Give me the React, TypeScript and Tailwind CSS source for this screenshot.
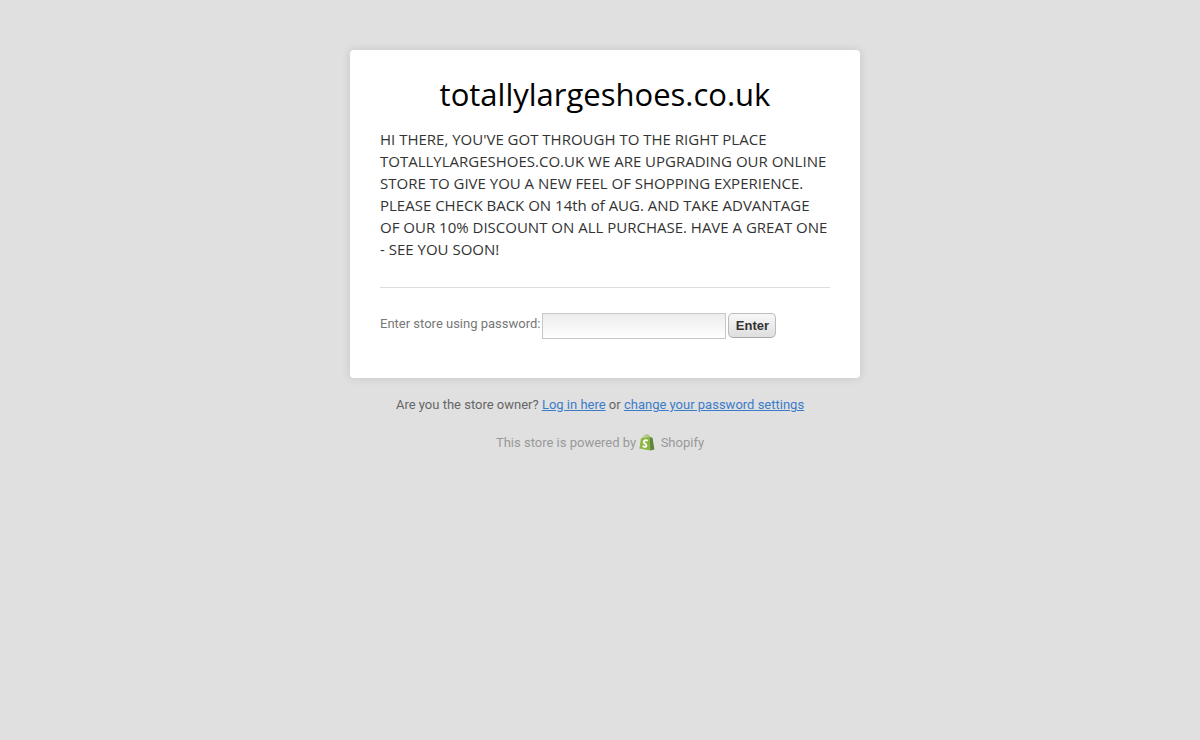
import { useState } from "react";

function ShopifyBag() {
    return (
        <svg
            viewBox="0 0 16 17"
            className="inline-block w-4 h-[17px] mr-0.5 align-[-4px]"
            aria-hidden="true"
        >
            <path d="M2 4.2 10.8 2.4l.4 14.1L.4 14.6z" fill="#8db543" />
            <path d="M10.8 2.4 12 3.5l1.5.2 1.9 11.7-4.2 1.1z" fill="#5a863e" />
            <path
                d="M4.1 4.4C4.5 2.4 5.8.9 7.1.9s1.8 1.2 1.8 2.6M6.5 3.9C6.8 2 7.9 1 8.8 1s1.5.8 1.7 2"
                fill="none"
                stroke="#8db543"
                strokeWidth="0.8"
            />
            <path
                d="M8.7 6.7C6.7 5.7 4.7 6.4 4.7 8c0 1.8 2.9 1.8 2.8 3.6-.1 1.6-2.2 1.7-3.9.5"
                fill="none"
                stroke="#fff"
                strokeWidth="1.8"
            />
        </svg>
    );
}

export default function App() {
    const [password, setPassword] = useState("");

    return (
        <div className="min-h-screen bg-[#e0e0e0] pt-[50px] font-['Roboto',sans-serif] text-[13px] leading-[18px]">
            <div className="max-w-[500px] mx-auto">
                {/* CARD */}
                <main className="w-full min-[520px]:w-[510px] bg-white rounded-sm px-[30px] pt-[23px] pb-[39px] shadow-[0_0_10px_rgba(0,0,0,0.12)]">
                    <h1 className="text-center font-['Open_Sans',sans-serif] text-[31px] leading-[42px] text-black">
                        totallylargeshoes.co.uk
                    </h1>

                    <p className="mt-[13px] font-['Open_Sans',sans-serif] text-[15px] leading-[22px] text-[#333]">
                        HI THERE, YOU'VE GOT THROUGH TO THE RIGHT PLACE
                        TOTALLYLARGESHOES.CO.UK WE ARE UPGRADING OUR ONLINE
                        STORE TO GIVE YOU A NEW FEEL OF SHOPPING EXPERIENCE.
                        PLEASE CHECK BACK ON 14th of AUG. AND TAKE ADVANTAGE
                        OF OUR 10% DISCOUNT ON ALL PURCHASE. HAVE A GREAT ONE
                        - SEE YOU SOON!
                    </p>

                    <form
                        className="mt-[27px] pt-[25px] border-t border-[#ddd] flex flex-wrap items-start gap-0.5"
                        onSubmit={(e) => e.preventDefault()}
                    >
                        <label htmlFor="password" className="pt-0.5 text-[#777] whitespace-nowrap">
                            Enter store using password:
                        </label>
                        <input
                            id="password"
                            type="password"
                            value={password}
                            onChange={(e) => setPassword(e.target.value)}
                            className="w-[184px] h-[26px] px-1 border border-[#c4c8c8] bg-linear-to-b from-[#ececec] to-white outline-none"
                        />
                        <button
                            type="submit"
                            className="w-12 h-[25px] rounded-[5px] border border-[#bbb] border-b-[#aaa] bg-linear-to-b from-[#f8f8f8] to-[#dedede] font-['Liberation_Sans',sans-serif] font-bold text-[#333] cursor-pointer"
                        >
                            Enter
                        </button>
                    </form>
                </main>

                {/* FOOTER */}
                <footer className="text-center">
                    <p className="mt-[18px] text-[#666]">
                        Are you the store owner?{" "}
                        <a href="#login" className="text-[#3b7cc9] underline">Log in here</a>{" "}
                        or{" "}
                        <a href="#settings" className="text-[#3b7cc9] underline">
                            change your password settings
                        </a>
                    </p>
                    <p className="mt-5 text-[#999]">
                        This store is powered by{" "}
                        <a href="#shopify">
                            <ShopifyBag /> Shopify
                        </a>
                    </p>
                </footer>
            </div>
        </div>
    );
}
